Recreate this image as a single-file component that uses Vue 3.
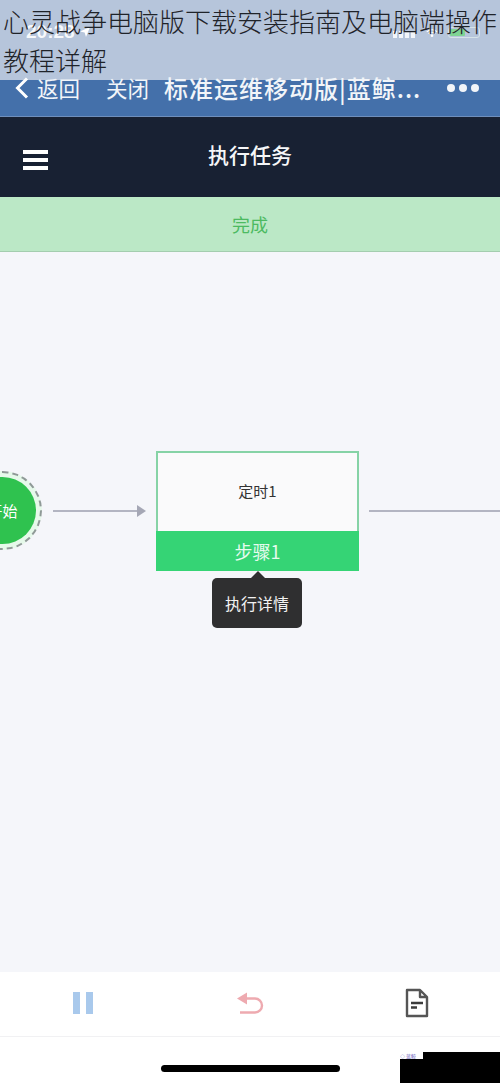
<template>
  <div class="page">
    <h1 class="headline">心灵战争电脑版下载安装指南及电脑端操作教程详解</h1>

    <div class="status-bar">
      <span class="time">20:28</span>
      <svg class="locate" width="12" height="12" viewBox="0 0 12 12"><path d="M11 1 1 5.500l4.600 1L7 11z" fill="#fff" /></svg>
      <div class="status-right">
        <div class="signal"><i></i><i></i><i></i><i></i></div>
        <svg class="wifi" width="12" height="10" viewBox="0 0 16 12"><path d="M1 4.500a10 10 0 0 1 14 0M3.500 7a6.500 6.500 0 0 1 9 0" fill="none" stroke="#fff" stroke-width="1.600" /><circle cx="8" cy="9.500" r="1.800" fill="#fff" /></svg>
        <div class="battery"><span></span></div>
      </div>
    </div>

    <div class="nav-bar">
      <svg class="back" width="14" height="22" viewBox="0 0 14 22"><path d="M12 1.500 2.500 11l9.500 9.500" fill="none" stroke="#fff" stroke-width="3" /></svg>
      <span class="nav-link">返回</span>
      <span class="nav-link close">关闭</span>
      <span class="nav-title">标准运维移动版|蓝鲸...</span>
      <div class="dots"><i></i><i></i><i></i></div>
    </div>

    <div class="task-header">
      <div class="burger"><i></i><i></i><i></i></div>
      <span class="task-title">执行任务</span>
    </div>

    <div class="done-banner">完成</div>

    <div class="canvas">
      <div class="start-ring"></div>
      <div class="start-node"><span>开始</span></div>

      <div class="edge edge-in"><i></i></div>
      <div class="step">
        <div class="step-body">定时1</div>
        <div class="step-name">步骤1</div>
      </div>
      <div class="edge edge-out"></div>

      <div class="tooltip">执行详情</div>
    </div>

    <div class="toolbar">
      <div class="tool">
        <svg width="22" height="24" viewBox="0 0 22 24"><rect x="1" y="1" width="7" height="22" fill="#a9c9ec" /><rect x="14" y="1" width="7" height="22" fill="#a9c9ec" /></svg>
      </div>
      <div class="tool">
        <svg width="28" height="24" viewBox="0 0 28 24"><path d="M5 7.500h14a7 7 0 0 1 0 14H4" fill="none" stroke="#eeaab0" stroke-width="2.400" /><path d="M1 7.500l10-6v12z" fill="#eeaab0" /></svg>
      </div>
      <div class="tool">
        <svg width="24" height="30" viewBox="0 0 24 30"><path d="M2 2h13l7 7v19H2zM15 2v7h7" fill="none" stroke="#555" stroke-width="2.400" stroke-linejoin="round" /><path d="M6 15h12M6 19.500h6" stroke="#3c3c3c" stroke-width="2.400" /></svg>
      </div>
    </div>

    <div class="home-area">
      <div class="home-bar"></div>
    </div>

    <div class="watermark"><span>◇ 蓝鲸</span></div>
  </div>
</template>

<script setup>
</script>

<style>
body {
  margin: 0;
}
</style>

<style scoped>
.page {
  position: relative;
  width: 500px;
  height: 1083px;
  overflow: hidden;
  display: flex;
  flex-direction: column;
  font-family: "Noto Sans CJK SC", "Liberation Sans", sans-serif;
  background: #fff;
}

.headline {
  position: absolute;
  top: 1px;
  left: 3px;
  width: 496px;
  margin: 0;
  font-size: 26px;
  line-height: 39px;
  font-weight: 300;
  color: #1f2329;
  z-index: 2;
}

.status-bar {
  height: 80px;
  flex-shrink: 0;
  background: #b6c5db;
  display: flex;
  align-items: flex-start;
  padding: 21px 20px 0 26px;
  box-sizing: border-box;
  color: #fff;
}

.time {
  font-family: "Liberation Sans", sans-serif;
  font-size: 19px;
  line-height: 22px;
  font-weight: 700;
  opacity: 0.9;
}

.locate {
  margin: 5px 0 0 4px;
}

.status-right {
  margin-left: auto;
  display: flex;
  align-items: flex-end;
  height: 17px;
}

.signal {
  display: flex;
  align-items: flex-end;
  gap: 2px;
}

.signal i {
  width: 4px;
  height: 7px;
  background: #f3f6fa;
}

.wifi {
  margin: 0 10px 0 11px;
}

.battery {
  width: 32px;
  height: 11px;
  border: 1px solid #d7e4e8;
  border-radius: 3px;
  box-sizing: border-box;
  padding: 1px;
}

.battery span {
  display: block;
  width: 15px;
  height: 100%;
  background: #7fd493;
  border-radius: 1px;
}

.nav-bar {
  height: 37px;
  flex-shrink: 0;
  background: #4470aa;
  box-shadow: inset 0 -1px 0 #6f8fbc;
  box-sizing: border-box;
  display: flex;
  align-items: center;
  color: #f2f5f9;
  padding: 0 21px 21px 15px;
}

.back {
  flex-shrink: 0;
}

.nav-link {
  margin-left: 8px;
  font-size: 21.500px;
  line-height: 30px;
  font-weight: 400;
  white-space: nowrap;
}

.close {
  margin-left: 26px;
}

.nav-title {
  margin-left: 15px;
  font-size: 24px;
  letter-spacing: 1px;
  line-height: 30px;
  font-weight: 500;
  white-space: nowrap;
}

.dots {
  margin-left: auto;
  display: flex;
  gap: 4px;
}

.dots i {
  width: 8px;
  height: 8px;
  border-radius: 50%;
  background: #f2f5f9;
}

.task-header {
  position: relative;
  height: 80px;
  flex-shrink: 0;
  background: #182133;
  display: flex;
  align-items: center;
  justify-content: center;
  padding-bottom: 6px;
  box-sizing: border-box;
}

.burger {
  position: absolute;
  left: 23px;
  top: 33px;
  display: flex;
  flex-direction: column;
  gap: 4px;
}

.burger i {
  display: block;
  width: 25px;
  height: 4px;
  background: #fff;
}

.task-title {
  color: #f5f6f8;
  font-size: 21px;
  line-height: 30px;
  font-weight: 500;
}

.done-banner {
  height: 55px;
  flex-shrink: 0;
  box-sizing: border-box;
  background: #bbe8c6;
  border-bottom: 1px solid #a4cdaf;
  display: flex;
  align-items: center;
  justify-content: center;
  color: #4cba61;
  font-size: 18px;
}

.canvas {
  position: relative;
  flex: 1;
  background: #f5f6fa;
}

.start-ring {
  position: absolute;
  left: -37px;
  top: 219px;
  width: 79px;
  height: 79px;
  box-sizing: border-box;
  border: 2px dashed #8f9a97;
  border-radius: 50%;
  background: #e6f9ea;
}

.start-node {
  position: absolute;
  left: -31px;
  top: 225px;
  width: 67px;
  height: 67px;
  border-radius: 50%;
  background: #2fc24f;
  color: #fff;
  font-size: 15px;
  display: flex;
  align-items: center;
  justify-content: center;
}

.edge {
  position: absolute;
  height: 2px;
  top: 258px;
  background: #b3b5c2;
}

.edge-in {
  left: 53px;
  width: 85px;
}

.edge-in i {
  position: absolute;
  right: -8px;
  top: -5px;
  border-left: 9px solid #a5a7b5;
  border-top: 6px solid transparent;
  border-bottom: 6px solid transparent;
}

.edge-out {
  left: 369px;
  width: 131px;
}

.step {
  position: absolute;
  left: 156px;
  top: 199px;
  width: 203px;
  height: 120px;
  display: flex;
  flex-direction: column;
  background: #fafafb;
}

.step-body {
  flex: 1;
  box-sizing: border-box;
  border: 2px solid #86d3a6;
  border-bottom: none;
  padding-bottom: 3px;
  display: flex;
  align-items: center;
  justify-content: center;
  color: #333;
  font-size: 15px;
}

.step-name {
  height: 40px;
  background: #35d475;
  color: #e6fbef;
  font-size: 18px;
  display: flex;
  align-items: center;
  justify-content: center;
}

.tooltip {
  position: absolute;
  left: 212px;
  top: 326px;
  width: 90px;
  height: 50px;
  border-radius: 5px;
  background: #2f2f30;
  color: #f2f2f2;
  font-size: 16px;
  display: flex;
  align-items: center;
  justify-content: center;
}

.tooltip::before {
  content: "";
  position: absolute;
  left: 39px;
  top: -7px;
  border-bottom: 7px solid #2f2f30;
  border-left: 7px solid transparent;
  border-right: 7px solid transparent;
}

.toolbar {
  height: 65px;
  flex-shrink: 0;
  box-sizing: border-box;
  border-bottom: 1px solid #f1f1f3;
  background: #fff;
  display: flex;
  padding-bottom: 3px;
}

.tool {
  flex: 1;
  display: flex;
  align-items: center;
  justify-content: center;
}

.home-area {
  height: 46px;
  flex-shrink: 0;
  background: #fff;
  display: flex;
  justify-content: center;
  padding-top: 28px;
  box-sizing: border-box;
}

.home-bar {
  width: 179px;
  height: 7px;
  border-radius: 4px;
  background: #000;
}

.watermark {
  position: absolute;
  left: 400px;
  top: 1052px;
  width: 100px;
  height: 31px;
  background: #000;
}

.watermark span {
  display: block;
  width: 23px;
  height: 7px;
  background: #fff;
  color: #6a5fc0;
  font-size: 5px;
  line-height: 7px;
  white-space: nowrap;
  overflow: hidden;
}
</style>
